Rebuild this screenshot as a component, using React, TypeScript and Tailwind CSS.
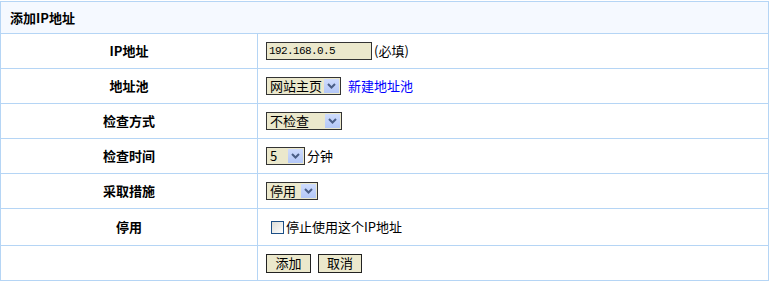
import React from 'react'

const FONT = { fontFamily: '"Noto Sans CJK SC", "Liberation Sans", sans-serif' }

function Chevron() {
  return (
    <svg width="9" height="6" viewBox="0 0 9 6">
      <path d="M1 1 L4.5 4.5 L8 1" fill="none" stroke="#4a5e86" strokeWidth="2" />
    </svg>
  )
}

function FakeSelect({ label, width }: { label: string; width: string }) {
  return (
    <div className={`flex h-[18px] ${width} items-stretch border border-[#333] bg-[#ebe8cc]`}>
      <span className="flex-1 pl-[3px] text-[13px] leading-[16px] text-black">{label}</span>
      <span className="m-px flex w-[15px] items-center justify-center bg-gradient-to-b from-[#cfdcfd] to-[#b3c7f7]">
        <Chevron />
      </span>
    </div>
  )
}

function Row({ label, children, h = 'h-[35px]' }: { label: string; children?: React.ReactNode; h?: string }) {
  return (
    <div className={`flex ${h} border-b border-[#b5d5f5]`}>
      <div className="flex w-[257px] items-center justify-center border-r border-[#b5d5f5] text-[13px] font-bold text-black">
        {label}
      </div>
      <div className="flex flex-1 items-center gap-[2px] pl-[8px] text-[13px] text-black">{children}</div>
    </div>
  )
}

export default function App() {
  return (
    <div className="bg-white pt-px" style={FONT}>
      <div className="w-[769px] border border-b-0 border-[#b5d5f5]">
        <div className="flex h-[32px] items-center border-b border-[#b5d5f5] bg-[#f5f9ff] pl-[9px] text-[13px] font-bold text-black">
          添加IP地址
        </div>
        <Row label="IP地址">
          <div className="flex h-[18px] w-[106px] items-center border border-[#333] bg-[#ebe8cc] pl-[2px] font-['Liberation_Mono'] text-[11px] tracking-[-0.6px]">
            192.168.0.5
          </div>
          <span>(必填)</span>
        </Row>
        <Row label="地址池">
          <FakeSelect label="网站主页" width="w-[75px]" />
          <a className="ml-[5px] text-[#0000ff]">新建地址池</a>
        </Row>
        <Row label="检查方式">
          <FakeSelect label="不检查" width="w-[76px]" />
        </Row>
        <Row label="检查时间">
          <FakeSelect label="5" width="w-[39px]" />
          <span>分钟</span>
        </Row>
        <Row label="采取措施">
          <FakeSelect label="停用" width="w-[52px]" />
        </Row>
        <Row label="停用" h="h-[37px]">
          <span className="ml-[5px] inline-block h-[13px] w-[13px] border border-[#1c4f86] bg-gradient-to-br from-[#dcdcd6] to-white" />
          <span>停止使用这个IP地址</span>
        </Row>
        <Row label="" h="h-[35px]">
          <button className="h-[19px] w-[45px] border border-[#222] bg-[#ebe8cc] text-[13px] leading-[16px]">添加</button>
          <button className="ml-[5px] h-[19px] w-[44px] border border-[#222] bg-[#ebe8cc] text-[13px] leading-[16px]">取消</button>
        </Row>
      </div>
    </div>
  )
}
